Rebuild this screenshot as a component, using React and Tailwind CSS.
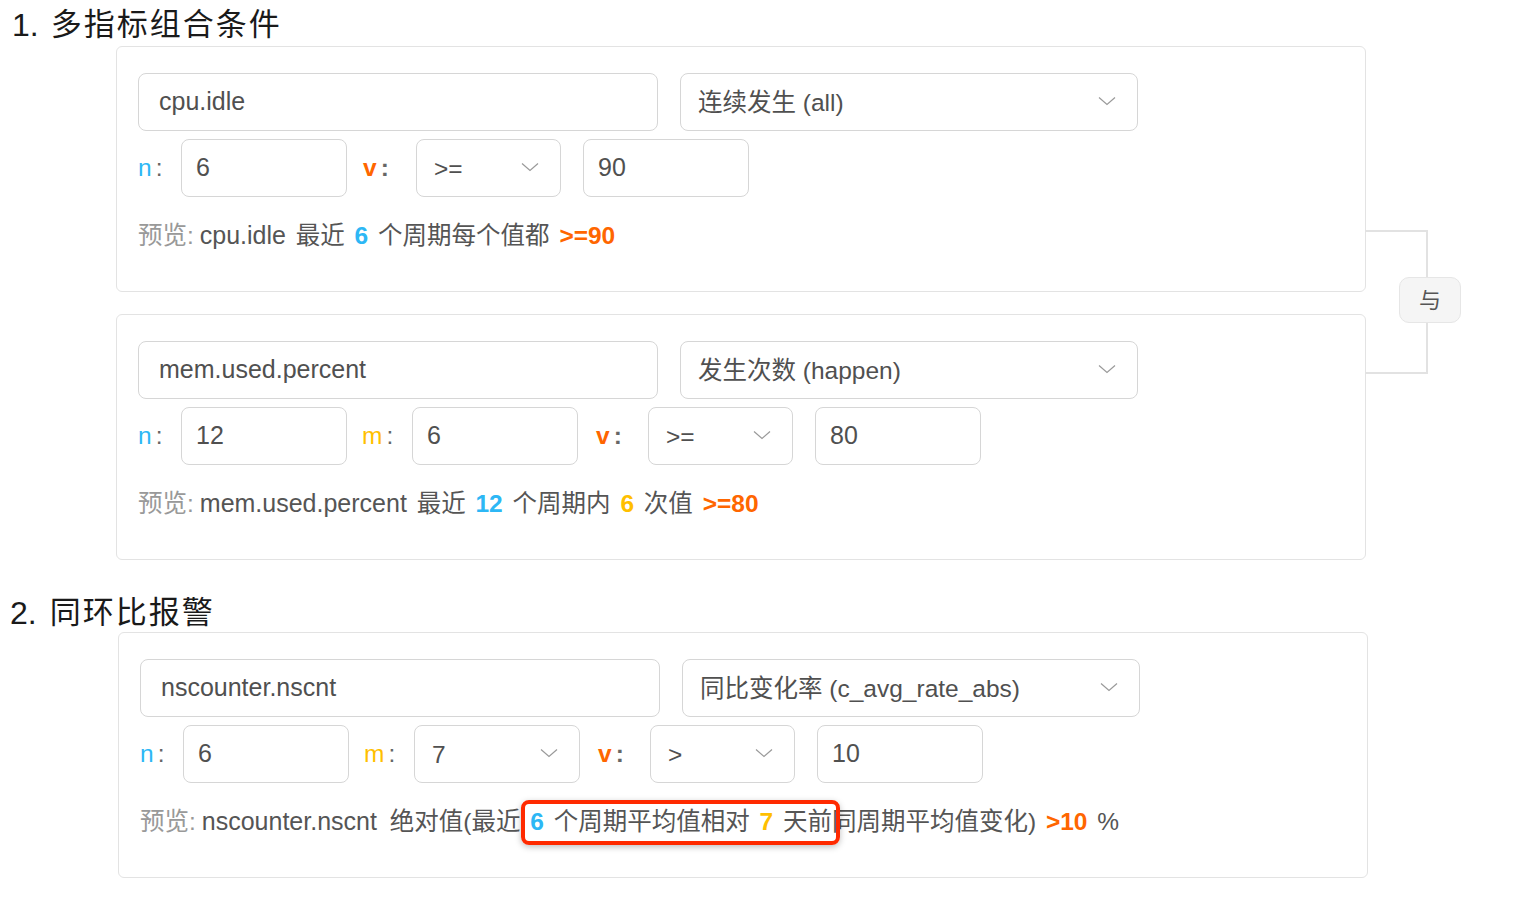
import React from "react";

const FONT = '"Liberation Sans", "Noto Sans CJK SC", sans-serif';

function Chevron() {
  return (
    <svg width="18" height="10" viewBox="0 0 18 10" fill="none">
      <polyline points="1,1.5 9,8.5 17,1.5" stroke="#9a9a9a" strokeWidth="1.2" fill="none" />
    </svg>
  );
}

function Input({ w, value, big }) {
  return (
    <div
      className={`h-[58px] ${w} rounded-[8px] border border-[#d6d6d6] bg-white flex items-center ${big ? "pl-[20px]" : "pl-[14px]"} text-[25px] text-[#505050]`}
    >
      {value}
    </div>
  );
}

function Select({ w, value }) {
  return (
    <div
      className={`h-[58px] ${w} rounded-[8px] border border-[#d6d6d6] bg-white flex items-center justify-between pl-[17px] pr-[21px] text-[24.5px] text-[#505050]`}
    >
      <span className="pt-[3px]">{value}</span>
      <span className="-mt-[2px]">
        <Chevron />
      </span>
    </div>
  );
}

function Label({ ch, color, w, bold }) {
  return (
    <div className={`${w} shrink-0 text-[24.5px] flex items-center ${bold ? "font-bold" : ""}`}>
      <span className={color}>{ch}</span>
      <span className="ml-[4px] text-[#666]">:</span>
    </div>
  );
}

function Card({ className = "", children }) {
  return (
    <div className={`w-[1250px] h-[246px] rounded-[6px] border border-[#e3e3e3] bg-white pl-[21px] pt-[26px] ${className}`}>
      {children}
    </div>
  );
}

export default function App() {
  return (
    <div className="w-[1522px] h-[902px] bg-white text-[#555] overflow-hidden" style={{ fontFamily: FONT }}>
      {/* Title 1 */}
      <div className="pl-[12px] pt-[3px] h-[46px] flex items-center text-[#1a1a1a]">
        <span className="text-[32px] leading-[40px]">1.</span>
        <span className="ml-[12px] text-[31px] leading-[40px] tracking-[2px]">多指标组合条件</span>
      </div>

      {/* Section 1 cards */}
      <div className="relative ml-[116px] w-[1250px]">
        <Card>
          <div className="flex gap-[22px]">
            <Input w="w-[520px]" value="cpu.idle" big />
            <Select w="w-[458px]" value="连续发生 (all)" />
          </div>
          <div className="mt-[8px] flex items-center">
            <Label ch="n" color="text-[#2db7f5]" w="w-[43px]" />
            <Input w="w-[166px]" value="6" />
            <div className="ml-[16px]">
              <Label ch="v" color="text-[#ff6600]" w="w-[53px]" bold />
            </div>
            <Select w="w-[145px]" value=">=" />
            <div className="ml-[22px]">
              <Input w="w-[166px]" value="90" />
            </div>
          </div>
          <div className="mt-[22px] leading-[32px] text-[24.5px] text-[#555] [word-spacing:3px]">
            <span className="text-[#999]">预览:</span><span className="ml-[6px] text-[25px]">cpu.idle</span> <span>最近</span>{" "}
            <b className="text-[#2db7f5]">6</b> <span>个周期每个值都</span>{" "}
            <b className="text-[#ff6600]">&gt;=90</b>
          </div>
        </Card>

        <Card className="mt-[22px]">
          <div className="flex gap-[22px]">
            <Input w="w-[520px]" value="mem.used.percent" big />
            <Select w="w-[458px]" value="发生次数 (happen)" />
          </div>
          <div className="mt-[8px] flex items-center">
            <Label ch="n" color="text-[#2db7f5]" w="w-[43px]" />
            <Input w="w-[166px]" value="12" />
            <div className="ml-[15px]">
              <Label ch="m" color="text-[#ffbf00]" w="w-[50px]" />
            </div>
            <Input w="w-[166px]" value="6" />
            <div className="ml-[18px]">
              <Label ch="v" color="text-[#ff6600]" w="w-[52px]" bold />
            </div>
            <Select w="w-[145px]" value=">=" />
            <div className="ml-[22px]">
              <Input w="w-[166px]" value="80" />
            </div>
          </div>
          <div className="mt-[22px] leading-[32px] text-[24.5px] text-[#555] [word-spacing:3px]">
            <span className="text-[#999]">预览:</span><span className="ml-[6px] text-[25px]">mem.used.percent</span> <span>最近</span>{" "}
            <b className="text-[#2db7f5]">12</b> <span>个周期内</span> <b className="text-[#ffbf00]">6</b>{" "}
            <span>次值</span> <b className="text-[#ff6600]">&gt;=80</b>
          </div>
        </Card>

        {/* bracket + 与 */}
        <div className="absolute left-[1249px] top-[184px] w-[63px] h-[144px] border-y-2 border-r-2 border-[#e2e2e2]" />
        <div className="absolute left-[1283px] top-[231px] w-[62px] h-[46px] rounded-[10px] border border-[#e6e6e6] bg-[#f5f5f5] flex items-center justify-center text-[22px] text-[#555]">
          与
        </div>
      </div>

      {/* Title 2 */}
      <div className="pl-[10px] mt-[32px] pt-[1px] h-[40px] flex items-center text-[#1a1a1a]">
        <span className="text-[32px] leading-[40px]">2.</span>
        <span className="ml-[13px] text-[31px] leading-[40px] tracking-[2px]">同环比报警</span>
      </div>

      {/* Section 2 card */}
      <div className="ml-[118px]">
        <Card>
          <div className="flex gap-[22px]">
            <Input w="w-[520px]" value="nscounter.nscnt" big />
            <Select w="w-[458px]" value="同比变化率 (c_avg_rate_abs)" />
          </div>
          <div className="mt-[8px] flex items-center">
            <Label ch="n" color="text-[#2db7f5]" w="w-[43px]" />
            <Input w="w-[166px]" value="6" />
            <div className="ml-[15px]">
              <Label ch="m" color="text-[#ffbf00]" w="w-[50px]" />
            </div>
            <Select w="w-[166px]" value="7" />
            <div className="ml-[18px]">
              <Label ch="v" color="text-[#ff6600]" w="w-[52px]" bold />
            </div>
            <Select w="w-[145px]" value=">" />
            <div className="ml-[22px]">
              <Input w="w-[166px]" value="10" />
            </div>
          </div>
          <div className="mt-[22px] leading-[32px] text-[24.5px] text-[#555] [word-spacing:3px]">
            <span className="text-[#999]">预览:</span><span className="ml-[6px] text-[25px]">nscounter.nscnt</span>{" "}
            <span className="ml-[3px]">绝对值(最近</span>{" "}
            <span className="relative inline-block">
              <b className="text-[#2db7f5]">6</b> <span>个周期平均值相对</span>{" "}
              <b className="text-[#ffbf00]">7</b> <span>天前</span>
              <span className="absolute -left-[9px] -right-[8px] -top-[6px] -bottom-[7px] rounded-[8px] border-[4px] border-[#ff2a00] shadow-[0_2px_6px_rgba(0,0,0,0.25)]" />
            </span>
            <span>同周期平均值变化)</span> <b className="text-[#ff6600]">&gt;10</b> <span>%</span>
          </div>
        </Card>
      </div>
    </div>
  );
}
